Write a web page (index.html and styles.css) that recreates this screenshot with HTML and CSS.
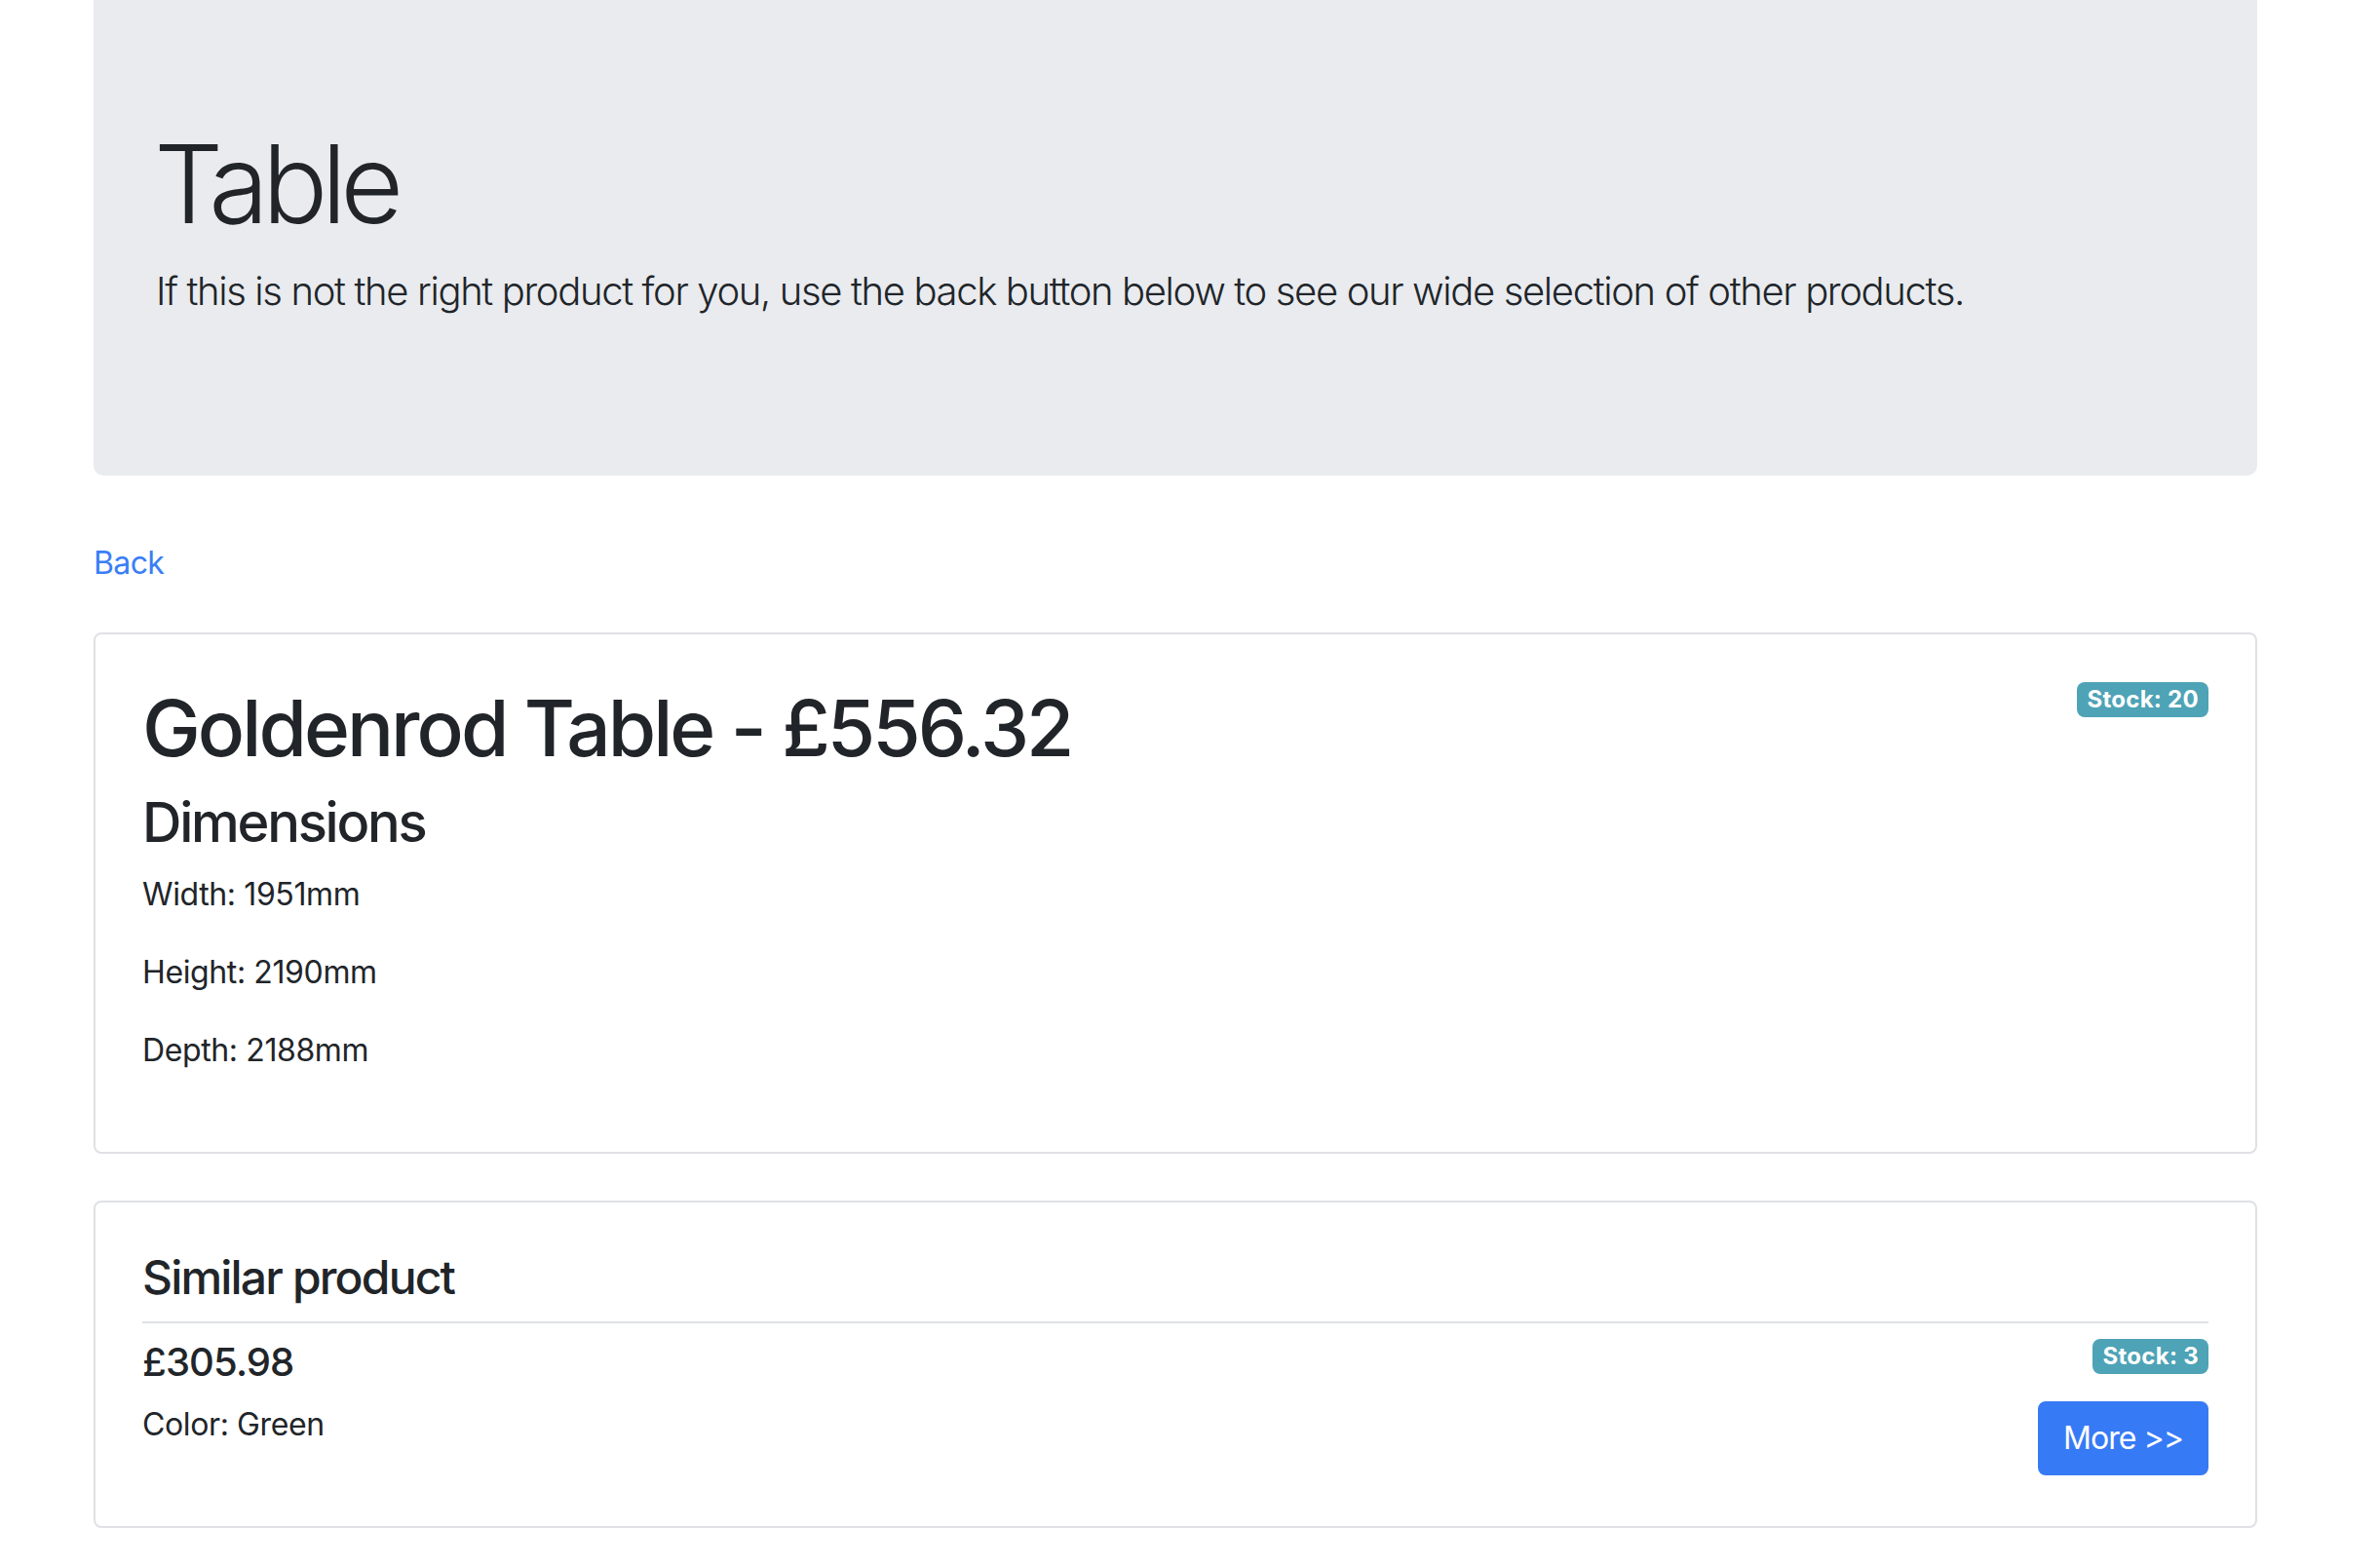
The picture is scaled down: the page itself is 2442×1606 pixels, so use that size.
FILE: index.html
```html
<!DOCTYPE html>
<html lang="en">
<head>
<meta charset="utf-8">
<title>Table</title>
<link rel="stylesheet" href="styles.css">
</head>
<body>
<div class="container">
  <div class="jumbotron">
    <h1 class="display">Table</h1>
    <p class="lead">If this is not the right product for you, use the back button below to see our wide selection of other products.</p>
  </div>
  <div class="back-row"><a href="#" class="back">Back</a></div>
  <div class="card">
    <div class="card-body">
      <span class="badge badge-right">Stock: 20</span>
      <h1 class="title">Goldenrod Table - £556.32</h1>
      <h3 class="subtitle">Dimensions</h3>
      <p class="text">Width: 1951mm</p>
      <p class="text">Height: 2190mm</p>
      <p class="text">Depth: 2188mm</p>
    </div>
  </div>
  <div class="card">
    <div class="card-body">
      <h4 class="similar-title">Similar product</h4>
      <hr class="rule">
      <div class="similar-row">
        <div class="similar-info">
          <h5 class="price">£305.98</h5>
          <p class="text">Color: Green</p>
        </div>
        <div class="similar-actions">
          <span class="badge">Stock: 3</span>
          <a href="#" class="btn">More &gt;&gt;</a>
        </div>
      </div>
    </div>
  </div>
</div>
</body>
</html>
```
FILE: styles.css
```css
* { box-sizing: border-box; }
html, body { margin: 0; padding: 0; background: #ffffff; }
body {
  font-family: Inter, "Noto Sans", "Liberation Sans", sans-serif;
  font-size: 32px;
  line-height: 1.5;
  color: #212529;
}
.container {
  width: 2220px;
  margin-left: 96px;
}
.jumbotron {
  background: #e9ebef;
  height: 488px;
  padding: 121px 62px 0 62px;
  border-radius: 0 0 10px 10px;
  margin-bottom: 64px;
}
.display {
  margin: 0 0 14px 0;
  font-size: 112px;
  font-weight: 300;
  line-height: 1.2;
  letter-spacing: -0.06em;
}
.lead {
  margin: 0 0 0 2px;
  font-size: 40px;
  font-weight: 300;
  line-height: 1.5;
  letter-spacing: -0.034em;
}
.back-row {
  height: 50px;
  padding-top: 2px;
  margin-bottom: 47px;
}
.back {
  color: #3a7ef6;
  text-decoration: none;
  letter-spacing: -0.02em;
}
.card {
  border: 2px solid #dfe1e5;
  border-radius: 8px;
  margin-bottom: 48px;
}
.card-body {
  padding: 48px;
}
.badge {
  display: inline-block;
  background: #4ea3b6;
  color: #ffffff;
  font-size: 24px;
  font-weight: 700;
  line-height: 1;
  padding: 6px 10px;
  border-radius: 8px;
  letter-spacing: 0.012em;
}
.badge-right {
  float: right;
  margin-top: 1px;
}
.title {
  margin: 0 0 16px 0;
  font-size: 80px;
  font-weight: 500;
  line-height: 1.2;
  letter-spacing: -0.037em;
}
.subtitle {
  margin: 0 0 16px 0;
  font-size: 56px;
  font-weight: 500;
  line-height: 1.2;
  letter-spacing: -0.04em;
}
.text {
  margin: 0 0 32px 0;
  letter-spacing: -0.012em;
}
.similar-title {
  margin: 0 0 16px 0;
  font-size: 48px;
  font-weight: 500;
  line-height: 1.2;
  letter-spacing: -0.038em;
}
.rule {
  margin: 0 0 16px 0;
  border: 0;
  border-top: 2px solid #dfe1e5;
}
.similar-row {
  display: flex;
  justify-content: space-between;
  align-items: flex-start;
}
.price {
  margin: 0 0 16px 0;
  font-size: 40px;
  font-weight: 500;
  line-height: 1.2;
  letter-spacing: -0.022em;
}
.similar-actions {
  display: flex;
  flex-direction: column;
  align-items: flex-end;
  gap: 28px;
}
.btn {
  display: inline-block;
  background: #377af5;
  color: #ffffff;
  text-decoration: none;
  border: 2px solid #377af5;
  border-radius: 8px;
  padding: 12px 24px;
  line-height: 48px;
  letter-spacing: -0.03em;
}
```
